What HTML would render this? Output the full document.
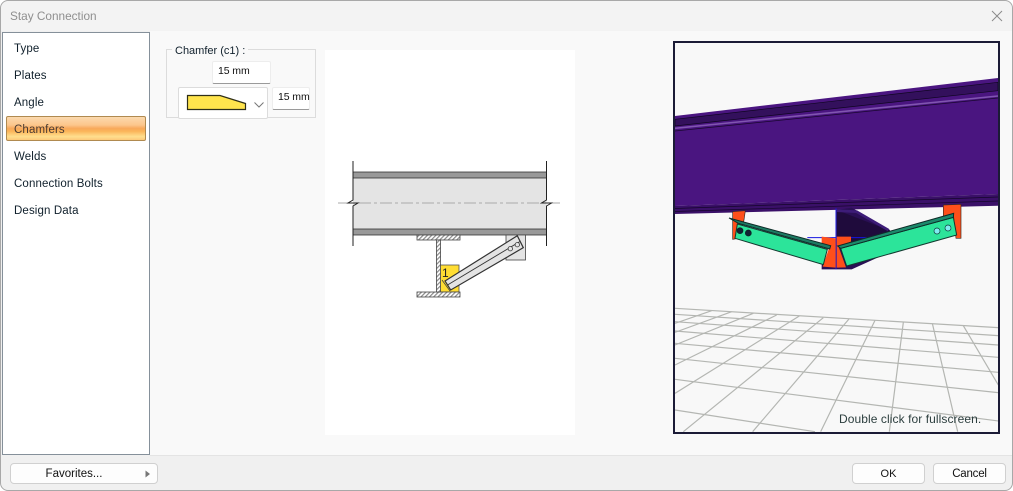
<!DOCTYPE html>
<html><head><meta charset="utf-8"><style>
html,body{margin:0;padding:0;width:1013px;height:491px;overflow:hidden;background:#fff;font-family:"Liberation Sans",sans-serif;font-size:12px;color:#1a1a1a}
div{position:absolute;box-sizing:border-box;white-space:nowrap}
.win{left:0;top:0;width:1013px;height:491px;background:#f0f0f0;border:1px solid #a8a8a8;border-radius:8px;overflow:hidden}
.item{left:14px;height:16px;line-height:16px;font-size:11.5px;letter-spacing:.12px;color:#10202c}
.btn{height:21px;top:463px;background:#fdfdfd;border:1px solid #d0d0d0;border-radius:4px;text-align:center;line-height:21px;font-size:11.5px;color:#111}
.inp{background:#fff;border:1px solid #ededed;border-bottom:1px solid #9a9a9a;border-radius:2px;font-size:10.5px;color:#111;letter-spacing:-.1px}
</style></head><body>
<div class="win"></div>
<div style="left:1px;top:1px;width:1011px;height:30px;background:#f3f3f3;border-radius:8px 8px 0 0"></div>
<div style="left:10px;top:9px;font-size:11.8px;color:#8f8f8f;line-height:14px">Stay Connection</div>
<svg style="position:absolute;left:991px;top:10px" width="12" height="12"><path d="M1 1L11 11M11 1L1 11" stroke="#8a8a8a" stroke-width="1" fill="none"/></svg>
<div style="left:150px;top:31px;width:862px;height:425px;background:#f9f9f9;border-bottom:1px solid #e4e4e4"></div>
<div style="left:2px;top:32px;width:148px;height:423px;background:#fff;border:1px solid #85909a"></div>
<div class="item" style="top:41px">Type</div>
<div class="item" style="top:68px">Plates</div>
<div class="item" style="top:95px">Angle</div>
<div style="left:6px;top:116px;width:140px;height:25px;border:1px solid #b08a50;border-radius:2px;background:linear-gradient(#fbd9ae 0,#fcc68c 35%,#f8a85a 50%,#fbb55a 62%,#ffdf8e 85%,#fdc878 100%)"></div>
<div class="item" style="top:122px;color:#4a3a30">Chamfers</div>
<div class="item" style="top:149px">Welds</div>
<div class="item" style="top:176px">Connection Bolts</div>
<div class="item" style="top:203px">Design Data</div>

<div style="left:166px;top:49px;width:150px;height:69px;border:1px solid #dcdcdc"></div>
<div style="left:172px;top:44px;height:14px;padding:0 3px;background:#f9f9f9;font-size:11px;line-height:14px;color:#10202c">Chamfer (c1) :</div>
<div class="inp" style="left:212px;top:61px;width:59px;height:23px;line-height:19px;padding-left:5px">15 mm</div>
<div style="left:178px;top:87px;width:90px;height:32px;background:#fff;border:1px solid #dcdcdc;border-radius:2px"></div>
<svg style="position:absolute;left:178px;top:87px" width="90" height="32"><path d="M9.500 8.500H42L67.500 16.500V22.500H9.500Z" fill="#ffe44d" stroke="#2e2e18" stroke-width="1.200"/><path d="M76.500 15.500L81 20L85.500 15.500" fill="none" stroke="#777" stroke-width="1"/></svg>
<div class="inp" style="left:272px;top:87px;width:38px;height:23px;line-height:19px;padding-left:5px">15 mm</div>

<div style="left:325px;top:50px;width:250px;height:385px;background:#fff"></div>
<svg style="position:absolute;left:325px;top:150px" width="250" height="160" viewBox="325 150 250 160">
<defs><pattern id="h" width="3" height="3" patternUnits="userSpaceOnUse" patternTransform="rotate(-45)"><rect width="3" height="3" fill="#fff"/><rect width="3" height="1.200" fill="#888"/></pattern></defs>
<rect x="353" y="178" width="193.500" height="51" fill="#e4e4e4"/>
<rect x="353" y="172" width="193.500" height="6" fill="#999" stroke="#333" stroke-width=".8"/>
<rect x="353" y="229" width="193.500" height="6" fill="#999" stroke="#333" stroke-width=".8"/>
<path d="M338 203H562" stroke="#aaa" stroke-width="1" stroke-dasharray="12 3 3 3" fill="none"/>
<path d="M353 161V200L348 203H358L353 206V246M546.500 161V200L541.500 203H551.500L546.500 206V246" fill="none" stroke="#222" stroke-width="1"/>
<rect x="506" y="235" width="19.500" height="25" fill="#e4e4e4" stroke="#444" stroke-width=".8"/>
<rect x="440" y="265" width="19" height="27" fill="#ffdd33" stroke="#555" stroke-width=".8"/>
<text x="442" y="277" font-size="12" font-family="Liberation Sans" fill="#222">1</text>
<rect x="417" y="235" width="43" height="5" fill="url(#h)" stroke="#444" stroke-width=".8"/>
<rect x="417" y="292" width="43" height="5" fill="url(#h)" stroke="#444" stroke-width=".8"/>
<rect x="436.500" y="240" width="4" height="52" fill="url(#h)" stroke="#444" stroke-width=".8"/>
<path d="M442 280L450 291" stroke="#444" stroke-width=".8"/>
<path d="M445 281L517.300 235.700L523.300 247.700L450.700 290Z" fill="#e4e4e4" stroke="#333" stroke-width="1.200"/>
<path d="M447.500 285L520 241.500" stroke="#333" stroke-width=".9"/>
<circle cx="510.300" cy="248.700" r="2.200" fill="#e4e4e4" stroke="#333" stroke-width=".8"/>
<circle cx="517.300" cy="244.700" r="2.200" fill="#e4e4e4" stroke="#333" stroke-width=".8"/>
</svg>

<div style="left:673px;top:41px;width:327px;height:393px;background:#f8f8f8;border:2px solid #1b1b36"></div>
<svg style="position:absolute;left:675px;top:43px" width="323" height="389" viewBox="675 43 323 389">
<g transform="translate(670,295) scale(.33333)" stroke="#b4b6b2" stroke-width="3.600" fill="none">
<path d="M15 40L985 98M15 58L985 122M15 80L985 150M15 108L985 187M15 145L985 232M15 190L985 293M15 253L985 378M15 345L435 410"/>
<path d="M15 85L125 47M15 112L185 50M15 150L250 55M15 210L320 60M15 295L388 63M40 410L460 68M248 410L537 72M452 410L615 76M658 410L700 82M787 85L863 410M880 92L985 270"/>
</g>
<polygon points="675,116 998,78 998,194 675,206" fill="#4a1580"/>
<polygon points="675,119.300 998,82.300 998,90.700 675,126" fill="#33105c" stroke="#0f0620" stroke-width=".7"/>
<path d="M675 128.300L998 96" stroke="#8055b0" stroke-width="1.600"/>
<path d="M675 131L998 98" stroke="#1a0830" stroke-width=".8"/>
<polygon points="675,206 998,194 998,205.700 675,214" fill="#3a1068"/>
<path d="M675 208.500L998 197M675 211.500L998 201" stroke="#16062c" stroke-width=".7"/>
<g transform="translate(670,170) scale(.33333)">
<polygon points="500,120 545,113 660,180 640,255 545,298 455,298 455,285 500,225" fill="#2a0f55"/>
<polygon points="500,120 660,182 500,228" fill="#1f0b3c"/>
<path d="M500 122L560 125L655 180" fill="none" stroke="#3d1c78" stroke-width="8"/>
<path d="M412 203H590" stroke="#1616e0" stroke-width="3"/>
<path d="M498 115V298" stroke="#1616e0" stroke-width="3"/>
<polygon points="188,125 226,122 222,150 205,205 188,208" fill="#ff4f1a" stroke="#3a2a20" stroke-width="2"/>
<polygon points="820,105 873,103 873,205 858,205 850,132 820,140" fill="#ff4f1a" stroke="#3a2a20" stroke-width="2"/>
<polygon points="455,200 497,205 497,293 458,290 478,232 455,222" fill="#ff4f1a"/>
<polygon points="500,200 543,200 543,215 505,228 528,292 500,293" fill="#ff4f1a"/>
<polygon points="202,162 472,238 460,284 195,205" fill="#2ce49a" stroke="#123a30" stroke-width="3"/>
<polygon points="177,144 482,227 479,237 205,160" fill="#1c7a62" stroke="#0e2c28" stroke-width="3"/>
<polygon points="512,235 850,142 860,195 530,288" fill="#2ce49a" stroke="#123a30" stroke-width="3"/>
<polygon points="503,228 851,130 850,142 512,235" fill="#1c8a6c" stroke="#0e2c28" stroke-width="3"/>
<circle cx="210" cy="182" r="9" fill="#123" stroke="#0a2020" stroke-width="2"/>
<circle cx="235" cy="189" r="9" fill="#123" stroke="#0a2020" stroke-width="2"/>
<circle cx="801" cy="183" r="9" fill="#80ecf0" stroke="#0e3a3a" stroke-width="2"/>
<circle cx="834" cy="174" r="9" fill="#80ecf0" stroke="#0e3a3a" stroke-width="2"/>
</g>
</svg>
<div style="left:839px;top:412px;font-size:12px;line-height:15px;letter-spacing:.08px;color:#2c3e3e">Double click for fullscreen.</div>

<div class="btn" style="left:10px;width:148px;padding-right:20px">Favorites...</div>
<svg style="position:absolute;left:145px;top:470px" width="6" height="8"><path d="M0.500 0.500L5 4L0.500 7.500Z" fill="#777"/></svg>
<div class="btn" style="left:852px;width:73px;font-size:11px">OK</div>
<div class="btn" style="left:933px;width:73px;letter-spacing:-.2px">Cancel</div>
</body></html>
